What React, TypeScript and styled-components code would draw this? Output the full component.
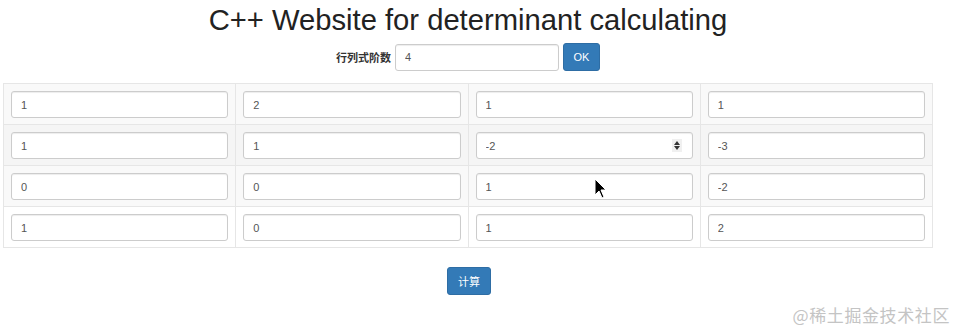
import React from 'react';
import styled, { createGlobalStyle } from 'styled-components';

const GlobalStyle = createGlobalStyle`
  html, body {
    margin: 0;
    padding: 0;
    background: #fff;
    font-family: "Liberation Sans", Arial, "Noto Sans CJK SC", sans-serif;
    color: #333;
  }
`;

const Page = styled.div`
  position: relative;
  width: 957px;
  height: 329px;
  overflow: hidden;
`;

const Container = styled.div`
  width: 930px;
  margin-left: 3px;
`;

const Title = styled.h1`
  margin: 0;
  padding-top: 3px;
  height: 36px;
  text-align: center;
  font-size: 29.2px;
  line-height: 34px;
  font-weight: 400;
  color: #222;
`;

const OrderForm = styled.div`
  display: flex;
  justify-content: center;
  align-items: center;
  height: 30px;
  margin-top: 3px;
`;

const Label = styled.label`
  font-size: 11px;
  font-weight: 700;
  margin-right: 4px;
  font-family: "Liberation Sans", "Noto Sans CJK SC", sans-serif;
`;

const Input = styled.input<{ $width?: number }>`
  box-sizing: border-box;
  width: ${({ $width }) => ($width ? `${$width}px` : '100%')};
  height: 27px;
  padding: 0 9px;
  border: 1px solid #ccc;
  border-radius: 3px;
  box-shadow: inset 0 1px 1px rgba(0, 0, 0, 0.075);
  font-family: "Liberation Sans", Arial, sans-serif;
  font-size: 11px;
  color: #555;
  background: #fff;
  outline: none;
`;

const Button = styled.button<{ $width: number }>`
  box-sizing: border-box;
  width: ${({ $width }) => $width}px;
  height: 28px;
  margin-left: 4px;
  padding: 0;
  border: 1px solid #2e6da4;
  border-radius: 3px;
  background: #337ab7;
  color: #fff;
  font-family: "Liberation Sans", "Noto Sans CJK SC", sans-serif;
  font-size: 11px;
`;

const Table = styled.table`
  width: 930px;
  margin-top: 11px;
  border-collapse: collapse;
  table-layout: fixed;
`;

const Row = styled.tr<{ $bg: string }>`
  background: ${({ $bg }) => $bg};
`;

const Cell = styled.td`
  position: relative;
  border: 1px solid #e6e6e6;
  padding: 7px 7px 6px;
  height: 27px;
`;

const Spinner = styled.div`
  position: absolute;
  right: 18px;
  top: 14px;
  width: 10px;
  height: 13px;
  background: #f0f0f0;
  display: flex;
  flex-direction: column;
  align-items: center;
  justify-content: center;
  gap: 1px;
`;

const Footer = styled.div`
  display: flex;
  justify-content: center;
  margin-top: 19px;
  padding-right: 2px;
`;

const Watermark = styled.div`
  position: absolute;
  right: 7px;
  top: 302px;
  font-family: "Noto Sans CJK SC", sans-serif;
  font-size: 17px;
  color: #c4c4c4;
  letter-spacing: 0.6px;
`;

const Cursor = styled.svg`
  position: absolute;
  left: 594px;
  top: 178px;
`;

const matrix = [
  ['1', '2', '1', '1'],
  ['1', '1', '-2', '-3'],
  ['0', '0', '1', '-2'],
  ['1', '0', '1', '2'],
];

const rowColors = ['#f9f9f9', '#f5f5f5', '#f9f9f9', '#fff'];

const App: React.FC = () => (
  <Page>
    <GlobalStyle />
    <Container>
      <Title>C++ Website for determinant calculating</Title>
      <OrderForm>
        <Label>行列式阶数</Label>
        <Input $width={164} defaultValue="4" />
        <Button $width={37}>OK</Button>
      </OrderForm>
      <Table>
        <tbody>
          {matrix.map((row, i) => (
            <Row key={i} $bg={rowColors[i]}>
              {row.map((v, j) => (
                <Cell key={j}>
                  <Input defaultValue={v} />
                  {i === 1 && j === 2 && (
                    <Spinner>
                      <svg width="6" height="4" viewBox="0 0 6 4">
                        <path d="M3 0 L6 4 L0 4 Z" fill="#333" />
                      </svg>
                      <svg width="6" height="4" viewBox="0 0 6 4">
                        <path d="M0 0 L6 0 L3 4 Z" fill="#333" />
                      </svg>
                    </Spinner>
                  )}
                </Cell>
              ))}
            </Row>
          ))}
        </tbody>
      </Table>
      <Footer>
        <Button $width={44}>计算</Button>
      </Footer>
    </Container>
    <Cursor width="14" height="22" viewBox="0 0 14 22">
      <path d="M1 1 L1 17 L5 13 L8 20 L10 19 L7 12 L12 12 Z" fill="#000" stroke="#fff" strokeWidth="1" />
    </Cursor>
    <Watermark>@稀土掘金技术社区</Watermark>
  </Page>
);

export default App;
